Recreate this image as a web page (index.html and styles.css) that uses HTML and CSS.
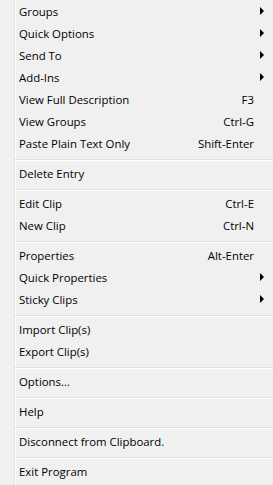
FILE: index.html
```html
<!DOCTYPE html>
<html>
<head>
<meta charset="utf-8">
<link rel="stylesheet" href="styles.css">
</head>
<body>
<div class="menu">
  <div class="item"><span class="label">Groups</span><span class="key"></span><span class="sub"><i class="arrow"></i></span></div>
  <div class="item"><span class="label">Quick Options</span><span class="key"></span><span class="sub"><i class="arrow"></i></span></div>
  <div class="item"><span class="label">Send To</span><span class="key"></span><span class="sub"><i class="arrow"></i></span></div>
  <div class="item"><span class="label">Add-Ins</span><span class="key"></span><span class="sub"><i class="arrow"></i></span></div>
  <div class="item"><span class="label">View Full Description</span><span class="key">F3</span><span class="sub"></span></div>
  <div class="item"><span class="label">View Groups</span><span class="key">Ctrl-G</span><span class="sub"></span></div>
  <div class="item"><span class="label">Paste Plain Text Only</span><span class="key">Shift-Enter</span><span class="sub"></span></div>
  <div class="sep"></div>
  <div class="item"><span class="label">Delete Entry</span><span class="key"></span><span class="sub"></span></div>
  <div class="sep"></div>
  <div class="item"><span class="label">Edit Clip</span><span class="key">Ctrl-E</span><span class="sub"></span></div>
  <div class="item"><span class="label">New Clip</span><span class="key">Ctrl-N</span><span class="sub"></span></div>
  <div class="sep"></div>
  <div class="item"><span class="label">Properties</span><span class="key">Alt-Enter</span><span class="sub"></span></div>
  <div class="item"><span class="label">Quick Properties</span><span class="key"></span><span class="sub"><i class="arrow"></i></span></div>
  <div class="item"><span class="label">Sticky Clips</span><span class="key"></span><span class="sub"><i class="arrow"></i></span></div>
  <div class="sep"></div>
  <div class="item"><span class="label">Import Clip(s)</span><span class="key"></span><span class="sub"></span></div>
  <div class="item"><span class="label">Export Clip(s)</span><span class="key"></span><span class="sub"></span></div>
  <div class="sep"></div>
  <div class="item"><span class="label">Options...</span><span class="key"></span><span class="sub"></span></div>
  <div class="sep"></div>
  <div class="item"><span class="label">Help</span><span class="key"></span><span class="sub"></span></div>
  <div class="sep"></div>
  <div class="item"><span class="label">Disconnect from Clipboard.</span><span class="key"></span><span class="sub"></span></div>
  <div class="sep"></div>
  <div class="item"><span class="label">Exit Program</span><span class="key"></span><span class="sub"></span></div>
</div>
</body>
</html>
```
FILE: styles.css
```css
html, body {
  margin: 0;
  padding: 0;
  background: #f0f0f0;
}
.menu {
  width: 273px;
  height: 485px;
  box-sizing: border-box;
  padding-top: 0;
  background: #f0f0f0 linear-gradient(to right, transparent 14px, #e2e3e3 14px, #e2e3e3 15px, #ffffff 15px, #ffffff 16px, transparent 16px);
  font-family: "Open Sans", "Noto Sans", sans-serif;
  font-size: 11.4px;
  color: #000;
  overflow: hidden;
}
.item {
  display: flex;
  align-items: center;
  height: 22px;
  padding-left: 19px;
}
.label {
  flex: 1;
  white-space: nowrap;
}
.key {
  white-space: nowrap;
}
.sub {
  width: 19px;
  display: flex;
  justify-content: flex-end;
  padding-right: 9px;
  box-sizing: border-box;
}
.arrow {
  display: block;
  width: 0;
  height: 0;
  border-left: 4px solid #000;
  border-top: 4px solid transparent;
  border-bottom: 4px solid transparent;
}
.sep {
  height: 0;
  margin: 5px 0 1px 15px;
  border-top: 1px solid #e0e0e0;
  border-bottom: 1px solid #ffffff;
}
```
